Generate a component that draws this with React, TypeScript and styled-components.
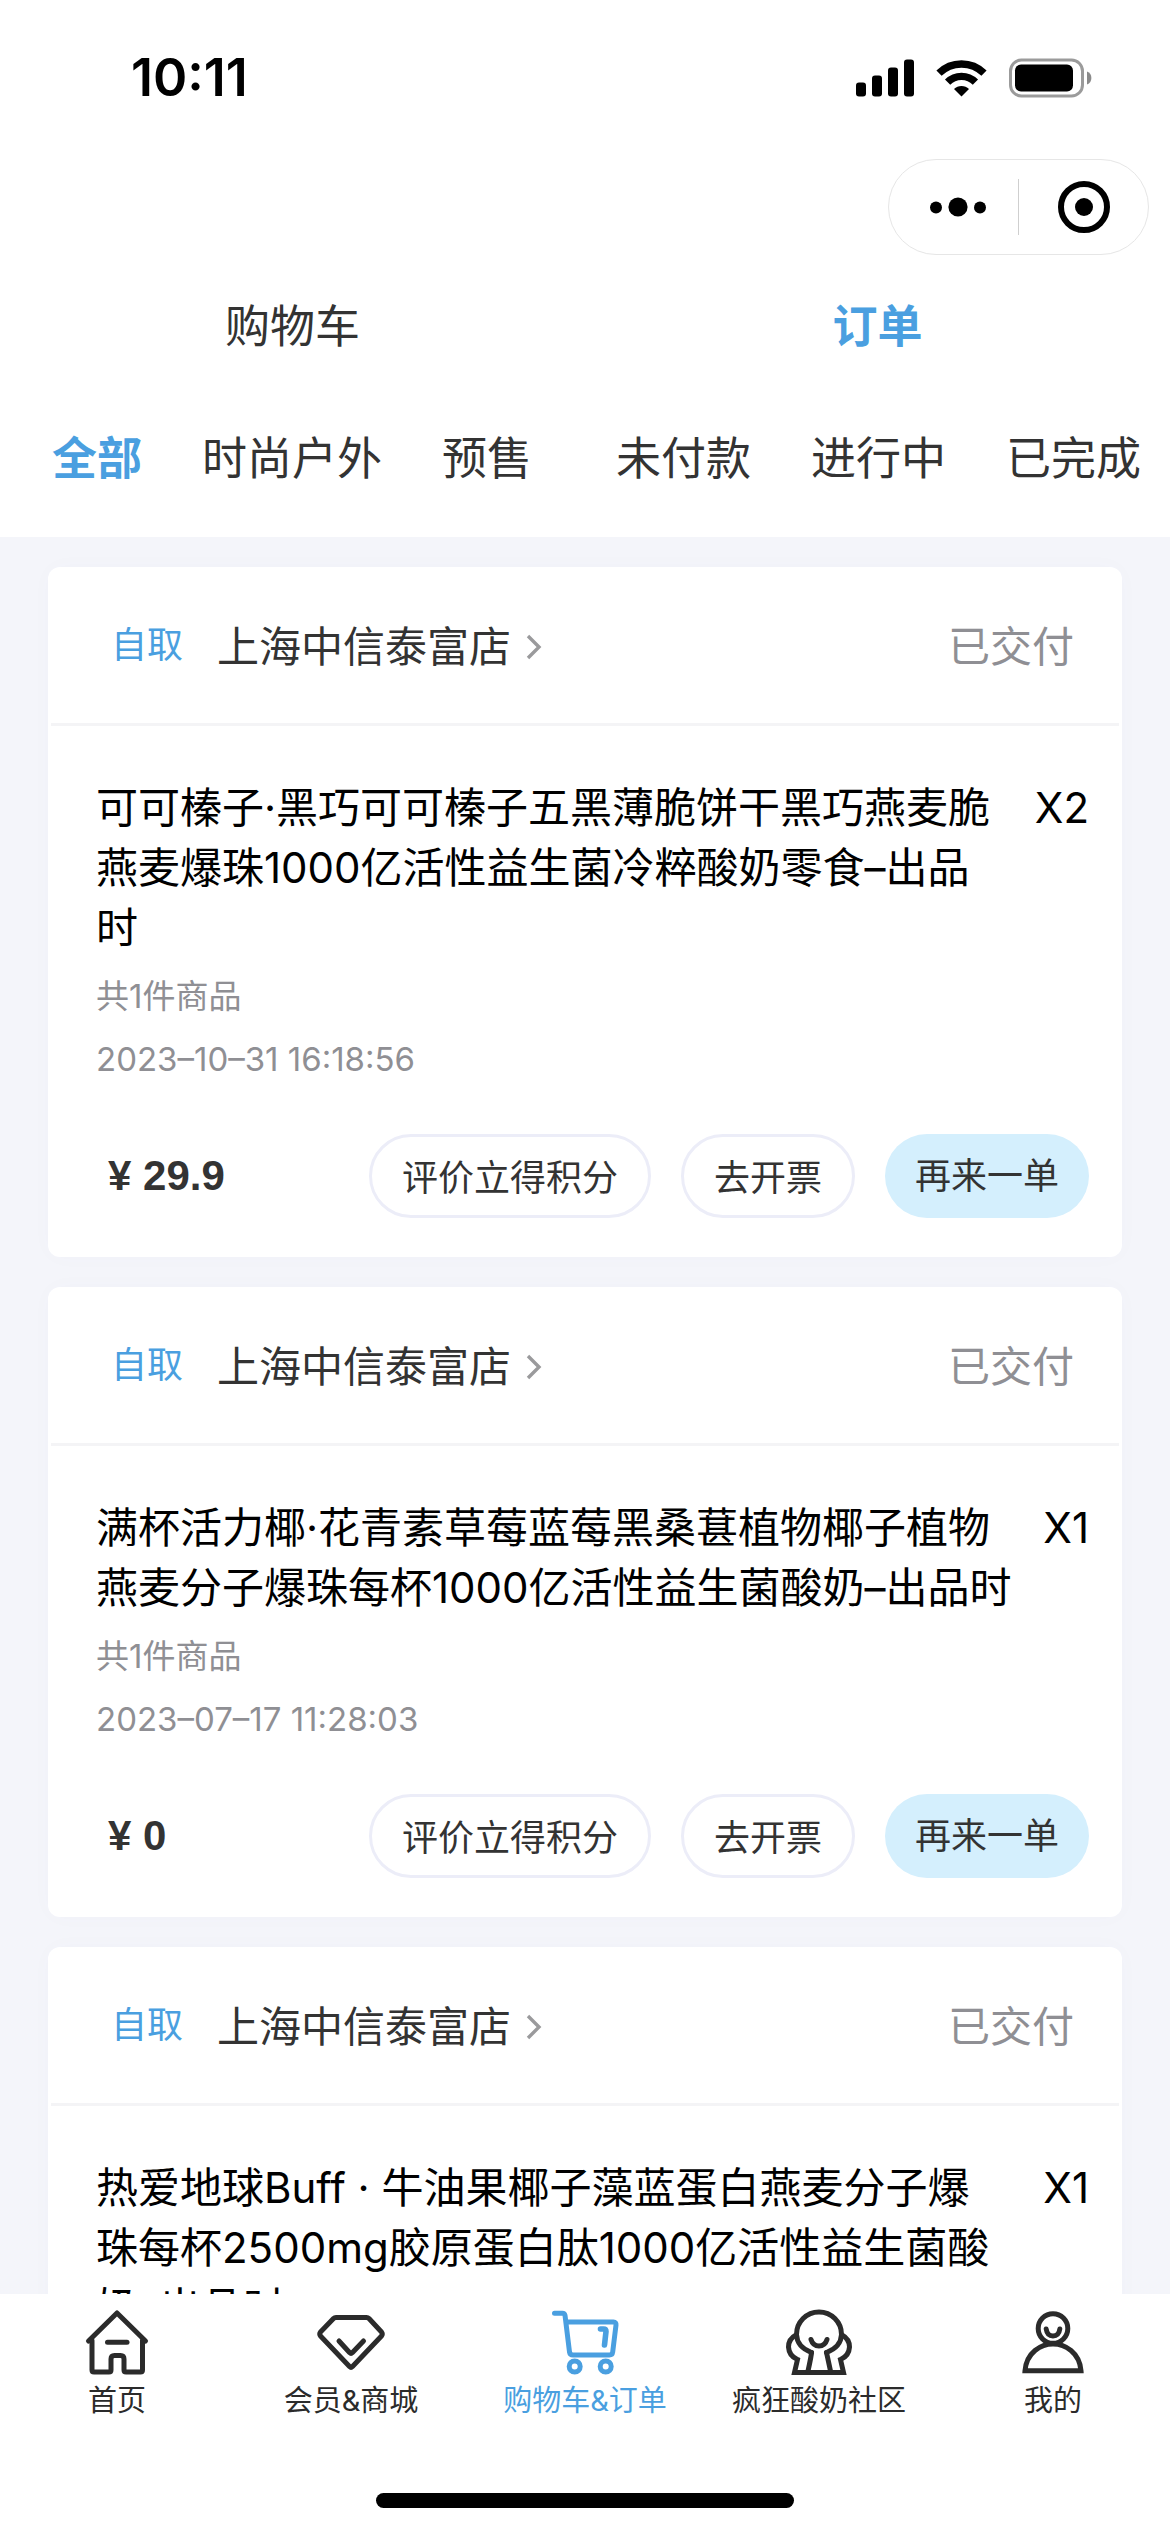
import React, { useState } from 'react';
import styled, { createGlobalStyle } from 'styled-components';

const priceFont = `"Liberation Sans", "Noto Sans CJK SC", sans-serif`;
const uiFont = `Inter, "Noto Sans CJK SC", sans-serif`;
const accent = '#4a9fe0';
const ink = '#333333';
const muted = '#8f8f94';

const GlobalStyle = createGlobalStyle`
  * { box-sizing: border-box; }
  html, body { margin: 0; padding: 0; }
  body {
    background: #f4f5fa;
    color: ${ink};
    font-family: ${uiFont};
  }
  button { font: inherit; color: inherit; background: none; border: 0; padding: 0; margin: 0; cursor: pointer; }
  a { color: inherit; text-decoration: none; }
  h2, p { margin: 0; padding: 0; }
  svg { display: block; }
`;

const Screen = styled.div`
  display: flex;
  flex-direction: column;
  height: 100vh;
  overflow: hidden;
`;

const Header = styled.header`
  flex: none;
  background: #fff;
`;

const StatusBar = styled.div`
  display: flex;
  align-items: center;
  justify-content: space-between;
  height: 156px;
  padding: 0 78px 0 131px;
`;

const Clock = styled.time`
  color: #000;
  font-size: 52px;
  font-weight: 600;
  line-height: 60px;
`;

const StatusIcons = styled.div`
  display: flex;
  align-items: center;
  gap: 22px;
`;

const CapsuleRow = styled.div`
  display: flex;
  justify-content: flex-end;
  padding: 3px 21px 0 0;
`;

const Capsule = styled.div`
  display: flex;
  align-items: center;
  width: 261px;
  height: 96px;
  border: 1px solid #e6e6e6;
  border-radius: 48px;
`;

const CapsuleButton = styled.button`
  flex: 1 1 50%;
  display: flex;
  align-items: center;
  justify-content: center;
  height: 100%;
  &:first-child { padding-left: 8px; }
`;

const CapsuleRule = styled.span`
  flex: none;
  width: 1px;
  height: 56px;
  background: #cfcfcf;
`;

const MainTabs = styled.nav`
  display: grid;
  grid-template-columns: 1fr 1fr;
  padding-top: 42px;
`;

const TabButton = styled.button<{ $active: boolean }>`
  height: 60px;
  font-size: 45px;
  line-height: 60px;
  white-space: nowrap;
  color: ${(p) => (p.$active ? accent : ink)};
  font-weight: ${(p) => (p.$active ? 700 : 400)};
`;

const Filters = styled.nav`
  display: flex;
  gap: 84px;
  padding: 72px 0 48px 52px;
  overflow: hidden;
`;

const FilterGroup = styled.div`
  display: flex;
  gap: 60px;
`;

const OrderList = styled.main`
  flex: 1;
  min-height: 0;
  display: flex;
  flex-direction: column;
  gap: 30px;
  padding: 30px 48px;
  overflow: auto;
  scrollbar-width: none;
`;

const Card = styled.article`
  flex: none;
  padding: 0 3px;
  border-radius: 12px;
  background: #fff;
  box-shadow: 0 0 24px rgba(90, 100, 150, 0.02);
`;

const CardHeader = styled.div`
  display: flex;
  align-items: center;
  height: 159px;
  padding: 0 45px 0 60px;
  border-bottom: 3px solid #f4f4f6;
`;

const Pickup = styled.span`
  margin-right: 34px;
  color: ${accent};
  font-size: 36px;
  line-height: 54px;
`;

const StoreLink = styled.a`
  display: flex;
  align-items: center;
  gap: 15px;
  padding-top: 4px;
  font-size: 42px;
  line-height: 60px;
`;

const OrderStatus = styled.span`
  margin-left: auto;
  padding-top: 4px;
  color: ${muted};
  font-size: 42px;
  line-height: 60px;
`;

const CardBody = styled.div`
  padding: 52px 30px 39px 45px;
`;

const ProductRow = styled.div`
  display: flex;
  justify-content: space-between;
  gap: 24px;
  margin-bottom: 7px;
  color: #000;
  font-size: 42px;
  line-height: 60px;
`;

const ProductName = styled.h2`
  font: inherit;
  white-space: pre-line;
`;

const Quantity = styled.span`
  flex: none;
`;

const Meta = styled.p`
  color: ${muted};
  font-size: 33px;
  line-height: 63px;
`;

const CardFooter = styled.div`
  display: flex;
  align-items: center;
  gap: 30px;
  margin-top: 43px;
`;

const Price = styled.span`
  margin-right: auto;
  padding-left: 12px;
  font-family: ${priceFont};
  font-size: 42px;
  font-weight: 700;
  line-height: 60px;
`;

const ActionButton = styled.button<{ $filled?: boolean }>`
  height: 84px;
  padding: ${(p) => (p.$filled ? '0 30px' : '3px 30px 0')};
  border: ${(p) => (p.$filled ? '0' : '3px solid #ecedf8')};
  border-radius: 42px;
  background: ${(p) => (p.$filled ? '#d4effd' : '#fff')};
  font-size: 36px;
  line-height: 54px;
  white-space: nowrap;
`;

const BottomBar = styled.footer`
  flex: none;
  display: flex;
  flex-direction: column;
  align-items: center;
  background: #fff;
`;

const BottomNav = styled.nav`
  display: grid;
  grid-template-columns: repeat(5, 1fr);
  width: 100%;
  padding-top: 12px;
`;

const NavItem = styled.a<{ $active: boolean }>`
  display: flex;
  flex-direction: column;
  align-items: center;
  gap: 2px;
  color: ${(p) => (p.$active ? accent : '#2b2b2b')};
  font-size: 29px;
  line-height: 42px;
  white-space: nowrap;
`;

const HomeIndicator = styled.span`
  width: 418px;
  height: 15px;
  margin: 71px 0 24px;
  border-radius: 8px;
  background: #000;
`;

const SignalIcon = () => (
  <svg width="58" height="38" viewBox="0 0 58 38" aria-label="信号">
    <rect x="0" y="23.5" width="10" height="14" rx="3" />
    <rect x="16" y="16.5" width="10" height="21" rx="3" />
    <rect x="32" y="8.5" width="10" height="29" rx="3" />
    <rect x="48" y="0.5" width="10" height="37" rx="3" />
  </svg>
);

const WifiIcon = () => (
  <svg width="51" height="38" viewBox="0 0 51 38" aria-label="无线网络">
    <g fill="none" stroke="#000" strokeWidth="7.4">
      <path d="M3 14.2 A32 32 0 0 1 48 14.2" />
      <path d="M11.6 23.2 A19.6 19.6 0 0 1 39.4 23.2" />
    </g>
    <path d="M25.5 37.6 L18 30 A10.6 10.6 0 0 1 33 30 Z" />
  </svg>
);

const BatteryIcon = () => (
  <svg width="83" height="40" viewBox="0 0 83 40" aria-label="电池">
    <rect x="1.5" y="2" width="72" height="36" rx="11" fill="none" stroke="#9b9b9b" strokeWidth="3" />
    <rect x="6" y="6.5" width="58" height="27" rx="6" />
    <path d="M78 13.5 A7 7 0 0 1 78 26.5 Z" fill="#8a8a8a" />
  </svg>
);

const MoreIcon = () => (
  <svg width="56" height="20" viewBox="0 0 56 20">
    <circle cx="6" cy="10.5" r="6" />
    <circle cx="28" cy="10" r="9.6" />
    <circle cx="50" cy="10.5" r="6" />
  </svg>
);

const CloseIcon = () => (
  <svg width="52" height="52" viewBox="0 0 52 52">
    <circle cx="26" cy="26" r="23" fill="none" stroke="#000" strokeWidth="6" />
    <circle cx="26" cy="26" r="9" />
  </svg>
);

const ChevronIcon = () => (
  <svg width="16" height="26" viewBox="0 0 16 26" fill="none" stroke="#9a9a9c" strokeWidth="3.4">
    <path d="M2 2 L13 13 L2 24" />
  </svg>
);

const NavIcon = ({ children }: { children: React.ReactNode }) => (
  <svg
    width="72"
    height="72"
    viewBox="0 0 72 72"
    fill="none"
    stroke="currentColor"
    strokeWidth="5"
    strokeLinecap="round"
    strokeLinejoin="round"
  >
    {children}
  </svg>
);

const HomeIcon = () => (
  <NavIcon>
    <path d="M7.5 35 L36 7 L64.500 35" />
    <path d="M11 34.500 V64 Q11 66 13 66 H28 Q30 66 30 64 V53 Q30 49.500 33.500 49.500 H39.500 Q43 49.500 43 53 V64 Q43 66 45 66 H59.500 Q61.500 66 61.500 64 V34.500" />
    <path d="M26.500 36.300 H46" />
  </NavIcon>
);

const DiamondIcon = () => (
  <NavIcon>
    <path d="M21 11.500 H51.500 Q53 11.500 54 12.500 L66.500 26 Q68 28 66.500 30 L37.500 60.500 Q36 62 34.500 60.500 L5.500 30 Q4 28 5.500 26 L18.500 12.500 Q19.500 11.500 21 11.500 Z" />
    <path d="M24 35 L34.500 46.500 Q36 48 37.500 46.500 L48.500 35" />
  </NavIcon>
);

const CartIcon = () => (
  <NavIcon>
    <path d="M5.500 7.300 H13.500 Q15.500 7.300 16 9.300 L20.500 46 Q21 49 24 49 H60.500 Q63.300 49 63.700 46 L67 19 Q67.300 16 64.500 16 H18" />
    <path d="M51.500 23 H54.500 Q57 23 57 25.500 L55.500 39" strokeWidth="5.600" />
    <circle cx="25.700" cy="60.500" r="5.500" />
    <circle cx="56.700" cy="60.500" r="5.500" />
  </NavIcon>
);

const CommunityIcon = () => (
  <NavIcon>
    <path d="M28.500 46.500 Q14 41 13.500 28.500 A22.500 22.500 0 0 1 58.500 28.500 Q58 41 43.500 46.500" />
    <path d="M28 33.500 Q30 40 36 40 Q42 40 44 33.500" />
    <path d="M13 29 Q5.500 33 5.500 41 Q6 50 14.500 53.500 L11.500 66.500 H60.500 L57.500 53.500 Q66 50 66.500 41 Q66.500 33 59 29" strokeLinejoin="miter" />
    <path d="M28.500 46.500 Q28.300 50 25 65 M43.500 46.500 Q44.300 50 47.500 65" />
  </NavIcon>
);

const ProfileIcon = () => (
  <NavIcon>
    <circle cx="36" cy="22.500" r="14.800" />
    <path d="M29.200 23 Q30.200 30 36 30 Q41.800 30 42.800 23" />
    <path d="M8 64.800 Q9 52 18 44.500 Q26 38 36 38 Q46 38 54 44.500 Q63 52 64 64.800 Z" strokeLinejoin="miter" />
  </NavIcon>
);

const filterGroups = [
  ['全部', '时尚户外', '预售'],
  ['未付款', '进行中', '已完成'],
];

const orders = [
  {
    name: '可可榛子·黑巧可可榛子五黑薄脆饼干黑巧燕麦脆\n燕麦爆珠1000亿活性益生菌冷粹酸奶零食–出品\n时',
    quantity: 2,
    time: '2023–10–31 16:18:56',
    price: '29.9',
  },
  {
    name: '满杯活力椰·花青素草莓蓝莓黑桑葚植物椰子植物\n燕麦分子爆珠每杯1000亿活性益生菌酸奶–出品时',
    quantity: 1,
    time: '2023–07–17 11:28:03',
    price: '0',
  },
  {
    name: '热爱地球Buff · 牛油果椰子藻蓝蛋白燕麦分子爆\n珠每杯2500mg胶原蛋白肽1000亿活性益生菌酸\n奶–出品时',
    quantity: 1,
    time: '2023–07–17 11:28:03',
    price: '0',
  },
];

const navItems = [
  { label: '首页', Icon: HomeIcon },
  { label: '会员&商城', Icon: DiamondIcon },
  { label: '购物车&订单', Icon: CartIcon },
  { label: '疯狂酸奶社区', Icon: CommunityIcon },
  { label: '我的', Icon: ProfileIcon },
];

type Order = (typeof orders)[number];

const OrderCard = ({ order }: { order: Order }) => (
  <Card>
    <CardHeader>
      <Pickup>自取</Pickup>
      <StoreLink href="#store">
        上海中信泰富店
        <ChevronIcon />
      </StoreLink>
      <OrderStatus>已交付</OrderStatus>
    </CardHeader>
    <CardBody>
      <ProductRow>
        <ProductName>{order.name}</ProductName>
        <Quantity>X{order.quantity}</Quantity>
      </ProductRow>
      <Meta>共1件商品</Meta>
      <Meta>{order.time}</Meta>
      <CardFooter>
        <Price>¥ {order.price}</Price>
        <ActionButton>评价立得积分</ActionButton>
        <ActionButton>去开票</ActionButton>
        <ActionButton $filled>再来一单</ActionButton>
      </CardFooter>
    </CardBody>
  </Card>
);

export default function App() {
  const [tab, setTab] = useState('订单');
  const [filter, setFilter] = useState('全部');

  return (
    <>
      <GlobalStyle />
      <Screen lang="zh-CN">
        <Header>
          <StatusBar>
            <Clock>10:11</Clock>
            <StatusIcons>
              <SignalIcon />
              <WifiIcon />
              <BatteryIcon />
            </StatusIcons>
          </StatusBar>
          <CapsuleRow>
            <Capsule>
              <CapsuleButton aria-label="更多">
                <MoreIcon />
              </CapsuleButton>
              <CapsuleRule />
              <CapsuleButton aria-label="关闭">
                <CloseIcon />
              </CapsuleButton>
            </Capsule>
          </CapsuleRow>
          <MainTabs>
            {['购物车', '订单'].map((name) => (
              <TabButton key={name} $active={name === tab} onClick={() => setTab(name)}>
                {name}
              </TabButton>
            ))}
          </MainTabs>
          <Filters>
            {filterGroups.map((group) => (
              <FilterGroup key={group[0]}>
                {group.map((name) => (
                  <TabButton key={name} $active={name === filter} onClick={() => setFilter(name)}>
                    {name}
                  </TabButton>
                ))}
              </FilterGroup>
            ))}
          </Filters>
        </Header>
        <OrderList>
          {orders.map((order) => (
            <OrderCard key={order.name} order={order} />
          ))}
        </OrderList>
        <BottomBar>
          <BottomNav>
            {navItems.map(({ label, Icon }) => (
              <NavItem key={label} href="#" $active={label === '购物车&订单'}>
                <Icon />
                {label}
              </NavItem>
            ))}
          </BottomNav>
          <HomeIndicator />
        </BottomBar>
      </Screen>
    </>
  );
}
